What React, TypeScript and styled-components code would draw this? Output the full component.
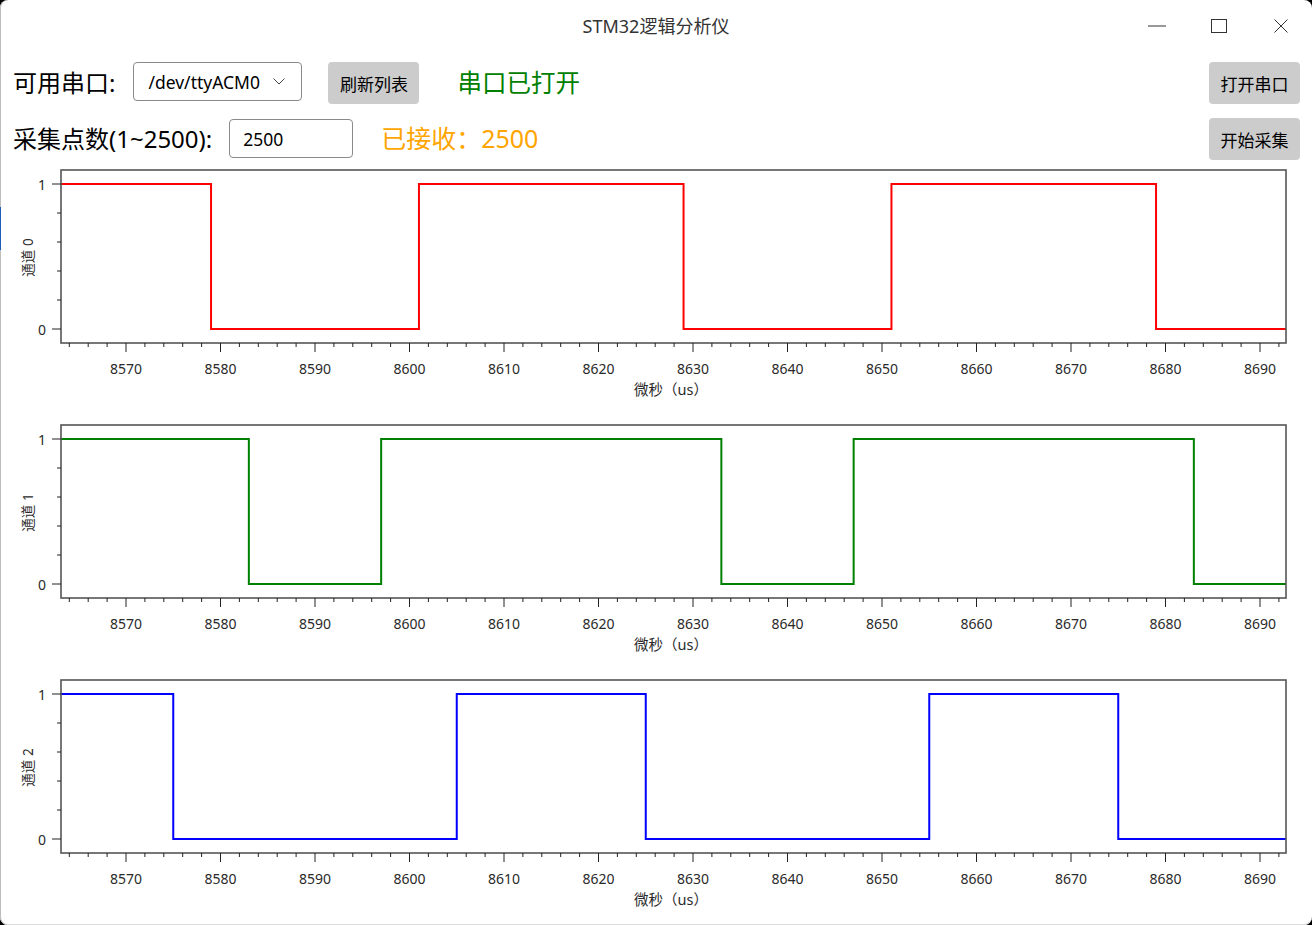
import React from "react";
import styled, { createGlobalStyle } from "styled-components";

const GlobalStyle = createGlobalStyle`
  html, body { margin: 0; padding: 0; background: #000; }
  body { font-family: "Noto Sans", "Noto Sans CJK SC", sans-serif; }
  * { box-sizing: border-box; }
`;

const Window = styled.div`
  position: relative;
  width: 1312px;
  height: 925px;
  background: #fff;
  border-radius: 8px;
  box-shadow: inset 1px 0 0 #bdbdbd, inset 0 -1px 0 #dcdcdc;
  display: flex;
  flex-direction: column;
  &::before {
    content: "";
    position: absolute;
    left: 0;
    top: 207px;
    width: 1px;
    height: 43px;
    background: #1b5fb8;
  }
`;

const TitleBar = styled.div`
  height: 52px;
  display: grid;
  grid-template-columns: 1fr auto 1fr;
  align-items: center;
`;

const Title = styled.div`
  grid-column: 2;
  font-size: 18px;
  color: #333;
  margin-top: -2px;
  font-family: "Noto Sans", "Noto Sans CJK SC", sans-serif;
`;

const Controls = styled.div`
  grid-column: 3;
  justify-self: end;
  display: flex;
  height: 52px;
`;

const CtrlButton = styled.div`
  width: 62px;
  height: 52px;
  display: flex;
  align-items: center;
  justify-content: center;
  color: #333;
`;

const Header = styled.div`
  padding: 10px 12px 0 13px;
  display: flex;
  flex-direction: column;
  gap: 14px;
`;

const Row = styled.div`
  display: flex;
  align-items: flex-start;
  height: 42px;
`;

const BigLabel = styled.div<{ $color?: string; $ml?: number; $size?: number }>`
  font-size: ${(p) => p.$size || 24}px;
  line-height: 41px;
  color: ${(p) => p.$color || "#000"};
  margin-left: ${(p) => p.$ml || 0}px;
  white-space: nowrap;
  font-family: "Noto Sans", "Noto Sans CJK SC", sans-serif;
`;

const Select = styled.div<{ $ml: number }>`
  margin-left: ${(p) => p.$ml}px;
  width: 169px;
  height: 39px;
  border: 1px solid #8a8a8a;
  border-radius: 4px;
  display: flex;
  align-items: center;
  justify-content: space-between;
  padding: 0 16px 0 14px;
  font-size: 17.5px;
  color: #000;
`;

const Input = styled.div<{ $ml: number }>`
  margin-left: ${(p) => p.$ml}px;
  margin-top: 1px;
  width: 124px;
  height: 39px;
  border: 1px solid #8a8a8a;
  border-radius: 4px;
  display: flex;
  align-items: center;
  padding-left: 13px;
  font-size: 17.5px;
  color: #000;
`;

const Button = styled.div<{ $ml?: number }>`
  margin-left: ${(p) => p.$ml || 0}px;
  width: 91px;
  height: 42px;
  background: #cccccc;
  border-radius: 4px;
  display: flex;
  align-items: center;
  justify-content: center;
  font-size: 17px;
  color: #000;
  font-family: "Noto Sans CJK SC", sans-serif;
`;

const Spacer = styled.div`
  flex: 1;
`;

const ChartStack = styled.div`
  flex: 1;
  min-height: 0;
  overflow: hidden;
  padding-top: 5px;
  display: flex;
  flex-direction: column;
`;

const ChartSvg = styled.svg`
  display: block;
  flex-shrink: 0;
  font-family: "Noto Sans", "Noto Sans CJK SC", sans-serif;
`;

const X0 = 126;
const T0 = 8570;
const PX = 9.45;
const LEFT = 61;
const RIGHT = 1286;
const TOP = 5;
const BOTTOM = 178;
const Y1 = 19;
const Y0 = 164;

const xOf = (t: number) => X0 + (t - T0) * PX;

type ChartProps = { channel: number; color: string; edges: number[] };

const Chart: React.FC<ChartProps> = ({ channel, color, edges }) => {
  let d = `M ${LEFT} ${Y1}`;
  let high = true;
  edges.forEach((t) => {
    const x = xOf(t);
    d += ` H ${x} V ${high ? Y0 : Y1}`;
    high = !high;
  });
  d += ` H ${RIGHT}`;

  const minor: number[] = [];
  for (let t = 8564; t <= 8692; t += 2) minor.push(t);
  const major: number[] = [];
  for (let t = 8570; t <= 8690; t += 10) major.push(t);
  const yMinor = [0.2, 0.4, 0.6, 0.8];
  const mid = (Y0 + Y1) / 2 + 1;

  return (
    <ChartSvg width={1312} height={255} viewBox="0 0 1312 255">
      <path d={d} fill="none" stroke={color} strokeWidth={2} strokeLinejoin="miter" />
      <rect
        x={LEFT}
        y={TOP}
        width={RIGHT - LEFT}
        height={BOTTOM - TOP}
        fill="none"
        stroke="#555"
        strokeWidth={1.6}
      />
      {minor.map((t) => (
        <line key={"m" + t} x1={xOf(t)} x2={xOf(t)} y1={BOTTOM} y2={BOTTOM + (t % 10 === 0 ? 9 : 4)} stroke="#222" strokeWidth={1} />
      ))}
      {major.map((t) => (
        <text key={"l" + t} x={xOf(t)} y={203} textAnchor="middle" dominantBaseline="central" fontSize={14} fill="#2a2a2a">
          {t}
        </text>
      ))}
      {yMinor.map((v) => {
        const y = Y0 - (Y0 - Y1) * v;
        return <line key={"y" + v} x1={LEFT - 4} x2={LEFT} y1={y} y2={y} stroke="#222" strokeWidth={1} />;
      })}
      <line x1={LEFT - 9} x2={LEFT} y1={Y1} y2={Y1} stroke="#222" strokeWidth={1} />
      <line x1={LEFT - 9} x2={LEFT} y1={Y0} y2={Y0} stroke="#222" strokeWidth={1} />
      <text x={46} y={Y1} textAnchor="end" dominantBaseline="central" fontSize={14} fill="#2a2a2a">1</text>
      <text x={46} y={Y0} textAnchor="end" dominantBaseline="central" fontSize={14} fill="#2a2a2a">0</text>
      <text
        x={28}
        y={mid}
        textAnchor="middle"
        dominantBaseline="central"
        fontSize={13.5}
        fill="#2a2a2a"
        transform={`rotate(-90 28 ${mid})`}
      >
        通道 {channel}
      </text>
      <text x={671} y={224} textAnchor="middle" dominantBaseline="central" fontSize={14.5} fill="#2a2a2a">
        微秒（us）
      </text>
    </ChartSvg>
  );
};

const channels: ChartProps[] = [
  { channel: 0, color: "#ff0000", edges: [8579, 8601, 8629, 8651, 8679] },
  { channel: 1, color: "#008000", edges: [8583, 8597, 8633, 8647, 8683] },
  { channel: 2, color: "#0000ff", edges: [8575, 8605, 8625, 8655, 8675] },
];

export default function App() {
  return (
    <>
      <GlobalStyle />
      <Window>
        <TitleBar>
          <Title>STM32逻辑分析仪</Title>
          <Controls>
            <CtrlButton>
              <svg width="18" height="2" viewBox="0 0 18 2">
                <line x1="0" y1="1" x2="18" y2="1" stroke="#333" strokeWidth="1" />
              </svg>
            </CtrlButton>
            <CtrlButton>
              <svg width="16" height="14" viewBox="0 0 16 14">
                <rect x="0.5" y="0.5" width="15" height="13" fill="none" stroke="#333" strokeWidth="1" />
              </svg>
            </CtrlButton>
            <CtrlButton>
              <svg width="14" height="14" viewBox="0 0 14 14">
                <path d="M0.5 0.5 L13.5 13.5 M13.5 0.5 L0.5 13.5" stroke="#333" strokeWidth="1" />
              </svg>
            </CtrlButton>
          </Controls>
        </TitleBar>
        <Header>
          <Row>
            <BigLabel>可用串口:</BigLabel>
            <Select $ml={18}>
              <span>/dev/ttyACM0</span>
              <svg width="12" height="7" viewBox="0 0 12 7">
                <path d="M0.5 0.5 L6 6 L11.5 0.5" fill="none" stroke="#444" strokeWidth="1" />
              </svg>
            </Select>
            <Button $ml={26}>刷新列表</Button>
            <BigLabel $color="#008000" $ml={38} $size={24.5}>串口已打开</BigLabel>
            <Spacer />
            <Button>打开串口</Button>
          </Row>
          <Row>
            <BigLabel>采集点数(1~2500):</BigLabel>
            <Input $ml={17}>2500</Input>
            <BigLabel $color="#ffa500" $ml={28} $size={25}>已接收：2500</BigLabel>
            <Spacer />
            <Button>开始采集</Button>
          </Row>
        </Header>
        <ChartStack>
          {channels.map((c) => (
            <Chart key={c.channel} {...c} />
          ))}
        </ChartStack>
      </Window>
    </>
  );
}
